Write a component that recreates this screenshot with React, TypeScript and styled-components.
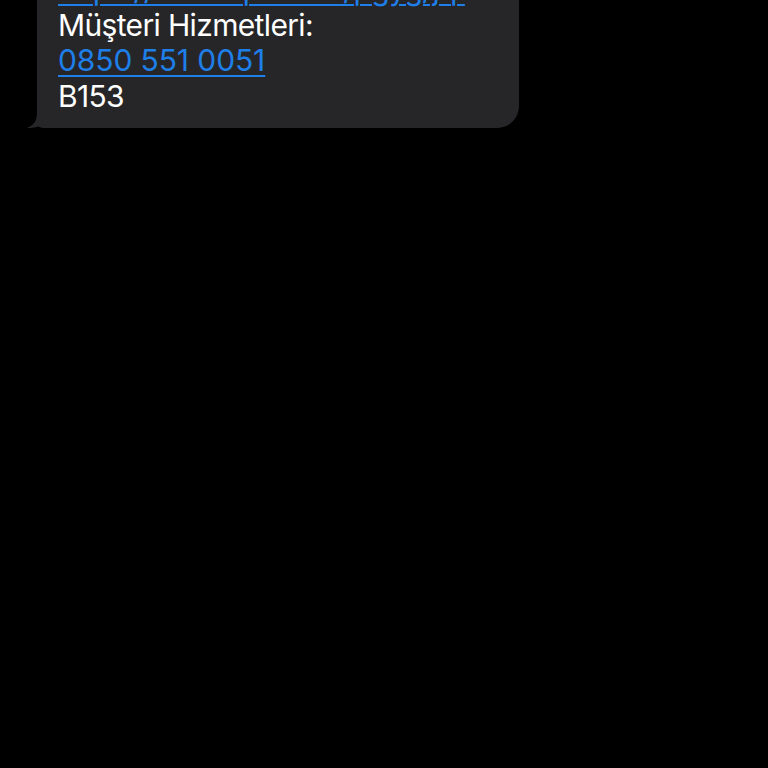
import React from "react";
import styled, { createGlobalStyle } from "styled-components";

const GlobalStyle = createGlobalStyle`
  html, body {
    margin: 0;
    padding: 0;
    background: #000;
    height: 100%;
  }
  body {
    font-family: Inter, "Liberation Sans", sans-serif;
    -webkit-font-smoothing: antialiased;
  }
`;

const Screen = styled.div`
  width: 768px;
  height: 768px;
  overflow: hidden;
  background: #000;
`;

const Thread = styled.div`
  display: flex;
  flex-direction: column;
  align-items: flex-start;
  margin-top: -36px;
  padding-left: 37px;
`;

const Bubble = styled.div`
  position: relative;
  width: 482px;
  box-sizing: border-box;
  padding: 8px 20px 14px 21px;
  background: #262628;
  border-radius: 22px;
  border-bottom-left-radius: 6px;
  color: #fff;
  font-size: 30px;
  line-height: 35.5px;
  letter-spacing: -0.65px;
`;

const Line = styled.div`
  white-space: nowrap;
`;

const Link = styled.a<{ $digits?: boolean }>`
  color: #1f7fe8;
  text-decoration: underline;
  text-decoration-thickness: 2px;
  text-underline-offset: 4px;
  letter-spacing: ${p => (p.$digits ? "-0.1px" : "-0.65px")};
`;

const Tail = styled.svg`
  position: absolute;
  left: -11px;
  bottom: 0;
  width: 26px;
  height: 24px;
`;

export default function App() {
  return (
    <Screen>
      <GlobalStyle />
      <Thread>
        <Bubble>
          <Line>
            <Link href="#">https://www.q.com.tr/pgyg/jq.</Link>
          </Line>
          <Line>Müşteri Hizmetleri:</Line>
          <Line>
            <Link href="#" $digits>
              0850 551 0051
            </Link>
          </Line>
          <Line>B153</Line>
          <Tail viewBox="0 0 26 24">
            <path
              d="M11 0 L11 10 Q11 20 1 24 Q11 24.5 18 19.5 Q21 23 26 24 L26 0 Z"
              fill="#262628"
            />
          </Tail>
        </Bubble>
      </Thread>
    </Screen>
  );
}
